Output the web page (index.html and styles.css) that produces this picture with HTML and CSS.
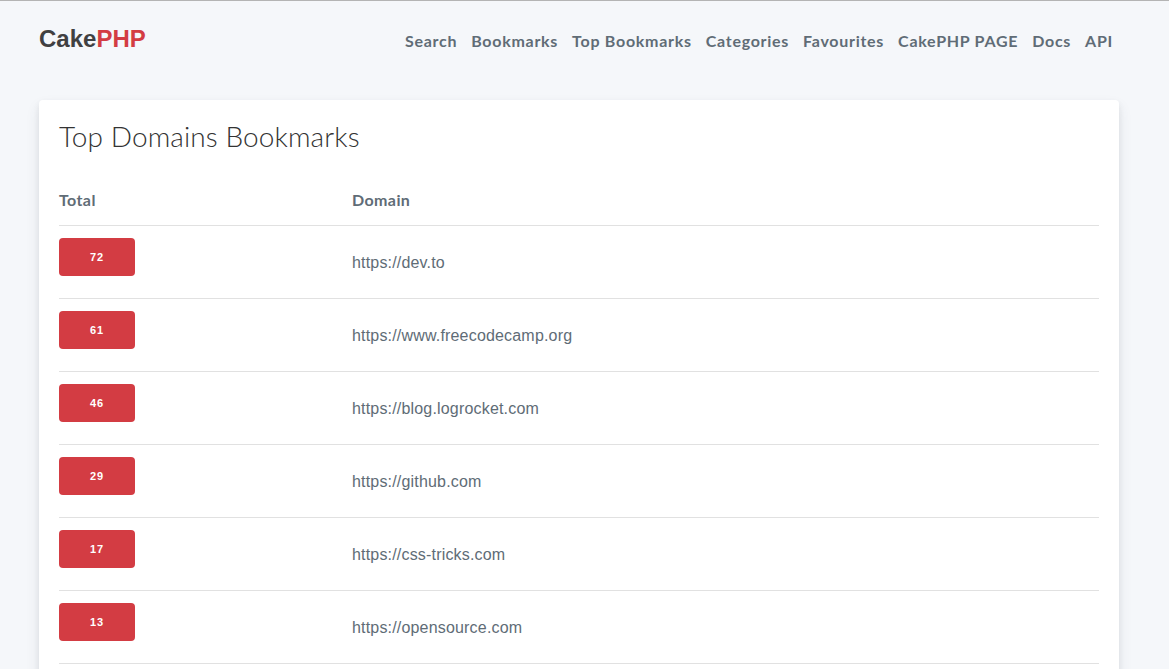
FILE: index.html
```html
<!DOCTYPE html>
<html lang="en">
<head>
<meta charset="utf-8">
<title>Top Domains Bookmarks</title>
<link rel="stylesheet" href="styles.css">
</head>
<body>
<nav class="top-nav">
  <div class="top-nav-title"><a href="#"><span class="cake">Cake</span><span class="php">PHP</span></a></div>
  <div class="top-nav-links">
    <a href="#">Search</a>
    <a href="#">Bookmarks</a>
    <a href="#">Top Bookmarks</a>
    <a href="#">Categories</a>
    <a href="#">Favourites</a>
    <a href="#">CakePHP PAGE</a>
    <a href="#">Docs</a>
    <a href="#">API</a>
  </div>
</nav>
<main class="container">
  <div class="content">
    <h3 class="title">Top Domains Bookmarks</h3>
    <table class="domains">
      <thead>
        <tr><th class="col-total">Total</th><th>Domain</th></tr>
      </thead>
      <tbody>
        <tr><td class="col-total"><span class="badge">72</span></td><td class="domain">https://dev.to</td></tr>
        <tr><td class="col-total"><span class="badge">61</span></td><td class="domain">https://www.freecodecamp.org</td></tr>
        <tr><td class="col-total"><span class="badge">46</span></td><td class="domain">https://blog.logrocket.com</td></tr>
        <tr><td class="col-total"><span class="badge">29</span></td><td class="domain">https://github.com</td></tr>
        <tr><td class="col-total"><span class="badge">17</span></td><td class="domain">https://css-tricks.com</td></tr>
        <tr><td class="col-total"><span class="badge">13</span></td><td class="domain">https://opensource.com</td></tr>
      </tbody>
    </table>
  </div>
</main>
</body>
</html>
```
FILE: styles.css
```css
html, body {
  margin: 0;
  padding: 0;
}
body {
  background: #f5f7fa;
  border-top: 1px solid #b4b4b4;
  font-family: "Lato", "Liberation Sans", sans-serif;
  color: #606c76;
  font-size: 16px;
  line-height: 1.6;
  overflow: hidden;
  height: 668px;
}
a {
  text-decoration: none;
}
.top-nav {
  display: flex;
  align-items: center;
  justify-content: space-between;
  width: 1080px;
  padding: 20px;
  margin: 0 0 20px 19px;
  height: 39px;
}
.top-nav-title a {
  font-family: "Liberation Sans", Arial, sans-serif;
  font-weight: 700;
  font-size: 24px;
  line-height: 1;
}
.cake { color: #404041; }
.php { color: #d33c43; }
.top-nav-links {
  display: flex;
  gap: 14px;
  margin-right: 6px;
}
.top-nav-links a {
  color: #606c76;
  font-weight: 700;
  font-size: 16px;
  letter-spacing: 0.72px;
}
.container {
  width: 1080px;
  margin-left: 39px;
}
.content {
  background: #fff;
  border-radius: 4px;
  padding: 20px;
  box-shadow: 0 7px 14px 0 rgba(60, 66, 87, 0.1), 0 3px 6px 0 rgba(0, 0, 0, 0.07);
  height: 700px;
}
.title {
  margin: -2px 0 21px;
  font-weight: 300;
  font-size: 28px;
  line-height: 1.3;
  letter-spacing: 0.1px;
  color: #333;
}
.domains {
  width: 100%;
  border-collapse: collapse;
  border-spacing: 0;
}
.domains th, .domains td {
  text-align: left;
  padding: 12px 15px;
  border-bottom: 1px solid #e1e1e1;
}
.domains th {
  font-weight: 700;
  color: #606c76;
  letter-spacing: 0.4px;
}
.domains .col-total {
  padding-left: 0;
  width: 263px;
}
.domains .domain {
  font-family: "Liberation Sans", Arial, sans-serif;
  color: #606c76;
  letter-spacing: 0.18px;
  padding-top: 13px;
  padding-bottom: 11px;
}
.badge {
  display: inline-block;
  vertical-align: top;
  width: 76px;
  height: 38px;
  line-height: 38px;
  margin-bottom: 10px;
  background: #d33c43;
  border-radius: 4px;
  color: #fff;
  text-align: center;
  font-family: "Liberation Sans", Arial, sans-serif;
  font-size: 11px;
  font-weight: 700;
  letter-spacing: 1px;
}
```
